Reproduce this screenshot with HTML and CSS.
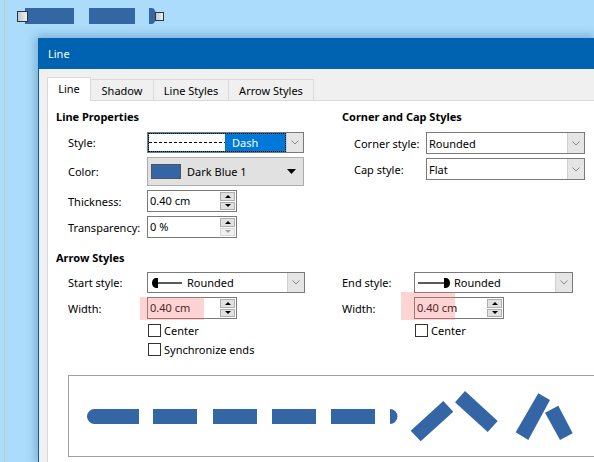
FILE: index.html
```html
<!DOCTYPE html>
<html lang="en">
<head>
    <meta charset="UTF-8">
    <title>Line</title>
    <link rel="stylesheet" href="styles.css">
</head>
<body>
<div class="desk">
    <svg class="sel-line" width="589" height="38" viewBox="5 0 589 38">
        <defs>
            <linearGradient id="hg" x1="0" y1="0" x2="1" y2="0">
                <stop offset="0" stop-color="#b9c6d6"/>
                <stop offset="1" stop-color="#eef2f6"/>
            </linearGradient>
        </defs>
        <rect x="25" y="8" width="49" height="16" fill="#3465a4"/>
        <rect x="89" y="8" width="46" height="16" fill="#3465a4"/>
        <path d="M149 8 H152 A4 8 0 0 1 152 24 H149 Z" fill="#3465a4"/>
        <rect x="17.5" y="11.5" width="10" height="10" fill="url(#hg)" stroke="#333"/>
        <rect x="155.5" y="12.5" width="8" height="8" fill="url(#hg)" stroke="#333"/>
    </svg>

    <div class="dialog">
        <div class="titlebar">Line</div>
        <div class="dlg-body">
            <div class="tabs">
                <div class="tab active t1">Line</div>
                <div class="tab t2">Shadow</div>
                <div class="tab t3">Line Styles</div>
                <div class="tab t4">Arrow Styles</div>
            </div>
            <div class="panel">
                <div class="section">
                    <div class="col col-left">
                        <div class="group-title">Line Properties</div>
                        <div class="rows rows-left">
                            <span class="lbl">Style:</span>
                            <div class="combo h21 focus">
                                <div class="value"><span class="sample"><span class="dashes"></span></span>Dash</div>
                                <div class="drop"><svg width="8" height="5"><polyline points="0.5,0.5 4,4 7.5,0.5" fill="none" stroke="#888"/></svg></div>
                            </div>

                            <span class="lbl">Color:</span>
                            <div class="colorbtn">
                                <span class="swatch"></span>
                                <span>Dark Blue 1</span>
                                <svg class="tri" width="9" height="5"><path d="M0 0 H9 L4.5 5 Z" fill="#000"/></svg>
                            </div>

                            <span class="lbl">Thickness:</span>
                            <div class="spin">
                                <span class="val">0.40 cm</span>
                                <span class="arrows"><span><i class="up"></i></span><span><i class="down"></i></span></span>
                            </div>

                            <span class="lbl">Transparency:</span>
                            <div class="spin">
                                <span class="val">0 %</span>
                                <span class="arrows"><span><i class="up"></i></span><span class="off"><i class="down"></i></span></span>
                            </div>
                        </div>
                    </div>
                    <div class="col">
                        <div class="group-title">Corner and Cap Styles</div>
                        <div class="rows rows-right indent">
                            <span class="lbl">Corner style:</span>
                            <div class="combo">
                                <div class="value">Rounded</div>
                                <div class="drop"><svg width="8" height="5"><polyline points="0.5,0.5 4,4 7.5,0.5" fill="none" stroke="#888"/></svg></div>
                            </div>
                            <span class="lbl">Cap style:</span>
                            <div class="combo">
                                <div class="value">Flat</div>
                                <div class="drop"><svg width="8" height="5"><polyline points="0.5,0.5 4,4 7.5,0.5" fill="none" stroke="#888"/></svg></div>
                            </div>
                        </div>
                    </div>
                </div>

                <div class="section arrow-sec">
                    <div class="col col-left">
                        <div class="group-title">Arrow Styles</div>
                        <div class="rows rows-arrow-l">
                            <span class="lbl">Start style:</span>
                            <div class="combo h21">
                                <div class="value">
                                    <svg class="arrow-ico" width="32" height="10"><path d="M5 0 H7 V10 H5 A4 5 0 0 1 5 0 Z" fill="#000"/><line x1="7" y1="5" x2="31" y2="5" stroke="#000" stroke-width="1.3"/></svg>
                                    Rounded
                                </div>
                                <div class="drop"><svg width="8" height="5"><polyline points="0.5,0.5 4,4 7.5,0.5" fill="none" stroke="#888"/></svg></div>
                            </div>
                            <span class="lbl">Width:</span>
                            <div class="spin-wrap">
                                <div class="spin">
                                    <span class="val">0.40 cm</span>
                                    <span class="arrows"><span><i class="up"></i></span><span><i class="down"></i></span></span>
                                </div>
                                <span class="hl hl-left"></span>
                            </div>
                        </div>
                        <div class="checks">
                            <div class="check"><span class="box"></span>Center</div>
                            <div class="check"><span class="box"></span>Synchronize ends</div>
                        </div>
                    </div>
                    <div class="col">
                        <div class="group-title">&nbsp;</div>
                        <div class="rows rows-right">
                            <span class="lbl">End style:</span>
                            <div class="combo h21">
                                <div class="value">
                                    <svg class="arrow-ico" width="32" height="10"><line x1="0" y1="5" x2="26" y2="5" stroke="#000" stroke-width="1.3"/><path d="M26 0 H28 A4 5 0 0 1 28 10 H26 Z" fill="#000"/></svg>
                                    Rounded
                                </div>
                                <div class="drop"><svg width="8" height="5"><polyline points="0.5,0.5 4,4 7.5,0.5" fill="none" stroke="#888"/></svg></div>
                            </div>
                            <span class="lbl">Width:</span>
                            <div class="spin-wrap">
                                <div class="spin">
                                    <span class="val">0.40 cm</span>
                                    <span class="arrows"><span><i class="up"></i></span><span><i class="down"></i></span></span>
                                </div>
                                <span class="hl hl-right"></span>
                            </div>
                        </div>
                        <div class="checks checks-right">
                            <div class="check"><span class="box"></span>Center</div>
                        </div>
                    </div>
                </div>

                <div class="preview">
                    <svg width="525" height="80" viewBox="69 376 525 80">
                        <g fill="#3465a4">
                            <path d="M94.5 409 H139 V424 H94.5 A7.5 7.5 0 0 1 94.5 409 Z"/>
                            <rect x="153" y="409" width="44" height="15"/>
                            <rect x="213" y="409" width="44" height="15"/>
                            <rect x="272" y="409" width="44" height="15"/>
                            <rect x="331" y="409" width="44" height="15"/>
                            <path d="M390 409 A7.5 7.5 0 0 1 390 424 Z"/>
                            <polygon points="410.7,430.7 443.3,401 453.3,411.7 420.7,441.3"/>
                            <polygon points="455,402.3 465,391 497.7,421 487.7,432"/>
                            <polygon points="515.7,432.3 538.3,393.3 550,400 528.3,440"/>
                            <polygon points="545,412.7 558.3,405.7 572.7,433.3 560,440"/>
                        </g>
                    </svg>
                </div>
            </div>
        </div>
    </div>
</div>
</body>
</html>
```

FILE: styles.css
```css
* {
    box-sizing: border-box;
}
html, body {
    margin: 0;
    height: 462px;
    overflow: hidden;
}
body {
    background-color: #abdcfb;
    font-family: 'Noto Sans', 'Open Sans', sans-serif;
    font-size: 11px;
    color: #000;
}
.desk {
    margin-left: 4px;
    border-left: 1px solid #cdc6c9;
    height: 462px;
}
.sel-line {
    display: block;
}
/* dialog runs off the right and bottom edge of the screen */
.dialog {
    display: flex;
    flex-direction: column;
    margin-left: 33px;
    width: 556px;
    height: 424px;
    border-left: 1px solid #0063b1;
    border-top: 1px solid #0063b1;
    background-color: #f0f0f0;
    box-shadow: 0 0 10px 2px rgba(0, 50, 100, 0.3);
}
.titlebar {
    height: 30px;
    line-height: 30px;
    padding-left: 9px;
    background-color: #0063b1;
    color: #fff;
}
.dlg-body {
    flex: 1;
    display: flex;
    flex-direction: column;
    padding: 8px 0 0 8px;
}
.tabs {
    display: flex;
    align-items: flex-end;
    height: 23px;
}
.tab {
    height: 21px;
    display: flex;
    align-items: center;
    justify-content: center;
    padding-top: 1px;
    border: 1px solid #d9d9d9;
    border-bottom: none;
    margin-left: -1px;
    background-color: #f0f0f0;
}
.tab.active {
    position: relative;
    z-index: 1;
    height: 24px;
    margin-bottom: -1px;
    margin-left: 0;
    padding-top: 0;
    padding-bottom: 2px;
    background-color: #fff;
}
.t1 { width: 44px; }
.t2 { width: 64px; }
.t3 { width: 76px; }
.t4 { width: 86px; }
.panel {
    flex: 1;
    border-left: 1px solid #d9d9d9;
    border-top: 1px solid #d9d9d9;
    background-color: #fff;
    padding: 8px 0 0 8px;
}
.section {
    display: flex;
}
.arrow-sec {
    margin-top: 12px;
}
.col-left {
    width: 286px;
}
.group-title {
    height: 16px;
    line-height: 16px;
    font-weight: bold;
}
.rows {
    display: grid;
    align-items: center;
    row-gap: 4px;
    margin-top: 7px;
}
.arrow-sec .rows {
    margin-top: 6px;
}
.rows-left {
    margin-left: 12px;
    grid-template-columns: 79px 157px;
}
.rows-arrow-l {
    margin-left: 12px;
    grid-template-columns: 79px 158px;
}
.rows-right {
    grid-template-columns: 72px 159px;
}
.rows-right.indent {
    margin-left: 12px;
}
.lbl {
    white-space: nowrap;
}
.combo {
    display: flex;
    height: 22px;
    border: 1px solid #7a7a7a;
    background-color: #fff;
}
.combo.h21 {
    height: 21px;
}
.combo .value {
    flex: 1;
    display: flex;
    align-items: center;
    padding-left: 2px;
    white-space: nowrap;
}
.combo .drop {
    width: 17px;
    display: flex;
    align-items: center;
    justify-content: center;
    background-color: #e5e5e5;
    border-left: 1px solid #d0d0d0;
}
.combo.focus .value {
    padding-left: 1px;
    background-color: #0078d7;
    color: #fff;
    outline: 1px dotted #000;
    outline-offset: -1px;
}
.sample {
    width: 76px;
    height: 17px;
    margin-right: 7px;
    display: flex;
    align-items: center;
    background-color: #fff;
}
.dashes {
    width: 100%;
    height: 1px;
    background: repeating-linear-gradient(90deg, #000 0 3px, transparent 3px 5px);
}
.arrow-ico {
    margin: 0 4px 0 1px;
}
.colorbtn {
    display: flex;
    align-items: center;
    height: 29px;
    border: 1px solid #adadad;
    background-color: #e1e1e1;
}
.swatch {
    width: 30px;
    height: 15px;
    margin: 0 6px 0 3px;
    border: 1px solid #555;
    background-color: #3465a4;
}
.colorbtn .tri {
    margin-left: auto;
    margin-right: 7px;
}
.spin-wrap {
    position: relative;
}
.spin {
    display: flex;
    width: 90px;
    height: 22px;
    border: 1px solid #7a7a7a;
    background-color: #fff;
}
.spin .val {
    flex: 1;
    line-height: 20px;
    padding-left: 2px;
}
.spin .arrows {
    width: 16px;
    display: flex;
    flex-direction: column;
    gap: 1px;
    padding: 1px 1px 1px 0;
}
.spin .arrows span {
    flex: 1;
    display: flex;
    align-items: center;
    justify-content: center;
    background-color: #e1e1e1;
    border: 1px solid #adadad;
}
.spin .arrows span.off {
    background-color: #f0f0f0;
    border-color: #d6d6d6;
}
.up, .down {
    width: 0;
    height: 0;
    border-left: 3px solid transparent;
    border-right: 3px solid transparent;
}
.up {
    border-bottom: 3px solid #000;
}
.down {
    border-top: 3px solid #000;
}
.off .down {
    border-top-color: #a0a0a0;
}
.hl {
    position: absolute;
    background-color: rgba(248, 110, 110, 0.3);
}
.hl-left {
    left: -7px;
    top: 0;
    width: 64px;
    height: 23px;
}
.hl-right {
    left: -13px;
    top: -5px;
    width: 54px;
    height: 28px;
}
.checks {
    margin-left: 92px;
    margin-top: 2px;
}
.checks-right {
    margin-left: 73px;
}
.check {
    display: flex;
    align-items: center;
    gap: 3px;
    height: 19px;
}
.box {
    width: 13px;
    height: 13px;
    border: 1px solid #333;
    background-color: #fff;
}
.preview {
    height: 82px;
    margin: 16px 0 0 12px;
    border: 1px solid #a0a0a0;
    border-right: none;
    overflow: hidden;
}
.preview svg {
    display: block;
}
```
